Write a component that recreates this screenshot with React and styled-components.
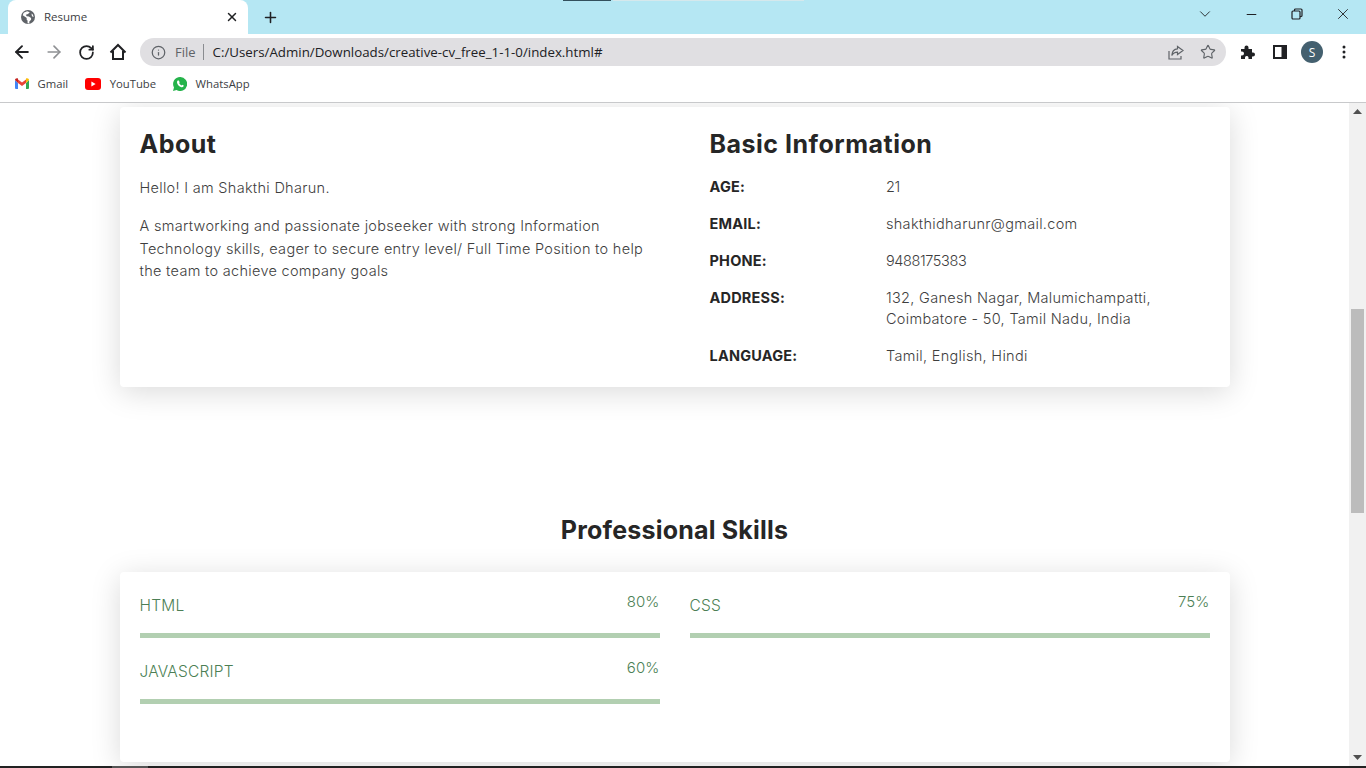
import React from "react";
import styled, { createGlobalStyle } from "styled-components";
import { ArrowLeft, ArrowRight, RotateCw, Info, Star, X, Plus, ChevronDown, Minus } from "lucide-react";

const about = [
  "Hello! I am Shakthi Dharun.",
  "A smartworking and passionate jobseeker with strong Information Technology skills, eager to secure entry level/ Full Time Position to help the team to achieve company goals",
];

const info = [
  ["AGE:", "21"],
  ["EMAIL:", "shakthidharunr@gmail.com"],
  ["PHONE:", "9488175383"],
  ["ADDRESS:", "132, Ganesh Nagar, Malumichampatti, Coimbatore - 50, Tamil Nadu, India"],
  ["LANGUAGE:", "Tamil, English, Hindi"],
];

const skills = [
  ["HTML", "80%"],
  ["CSS", "75%"],
  ["JAVASCRIPT", "60%"],
];

const Global = createGlobalStyle`
  html, body {
    margin: 0;
    height: 100%;
    overflow: hidden;
    background: #fff;
  }
  * { box-sizing: border-box; }
`;

const Screen = styled.div`
  width: 1366px;
  height: 768px;
  display: flex;
  flex-direction: column;
  overflow: hidden;
  font-family: "Open Sans", "Liberation Sans", sans-serif;
`;

const TabStrip = styled.div`
  height: 34px;
  flex: none;
  display: flex;
  align-items: flex-end;
  background: #b5e7f3;
  padding-left: 8px;
  position: relative;
`;

const Tab = styled.div`
  width: 240px;
  height: 34px;
  background: #fff;
  border-radius: 8px 8px 0 0;
  display: flex;
  align-items: center;
  padding: 0 9px 1px 13px;
  font-size: 11.5px;
  color: #3c4043;
`;

const TabTitle = styled.span`
  flex: 1;
  margin-left: 9px;
`;

const NewTab = styled.div`
  width: 44px;
  height: 34px;
  display: flex;
  align-items: center;
  justify-content: center;
  color: #202124;
`;

const Loading = styled.div`
  position: absolute;
  top: 0;
  left: ${(p) => p.$left}px;
  width: ${(p) => p.$width}px;
  height: 1px;
  background: ${(p) => p.$color};
`;

const WindowControls = styled.div`
  margin-left: auto;
  height: 34px;
  display: flex;
  align-items: flex-start;
  color: #202124;
`;

const WindowButton = styled.div`
  width: 46px;
  height: 28px;
  display: flex;
  align-items: center;
  justify-content: center;
`;

const Toolbar = styled.div`
  height: 34px;
  flex: none;
  display: flex;
  align-items: center;
  padding: 2px 0 0 6px;
  background: #fff;
`;

const NavButton = styled.div`
  width: 32px;
  height: 32px;
  display: flex;
  align-items: center;
  justify-content: center;
  color: ${(p) => p.$color || "#202124"};
`;

const Omnibox = styled.div`
  width: 1086px;
  height: 28px;
  margin: 0 6px;
  border-radius: 14px;
  background: #e0dfe2;
  display: flex;
  align-items: center;
  padding: 0 2px 0 11px;
  font-size: 13.3px;
  color: #202124;
`;

const FileLabel = styled.span`
  color: #5f6368;
  margin-left: 9px;
  padding-right: 7px;
  border-right: 1px solid #8a8c90;
  line-height: 16px;
  font-size: 13px;
`;

const Url = styled.span`
  margin-left: 9px;
  flex: 1;
`;

const OmniAction = styled.div`
  width: 32px;
  display: flex;
  justify-content: center;
  color: #5f6368;
`;

const Avatar = styled.div`
  width: 22px;
  height: 22px;
  margin: 0 5px;
  border-radius: 50%;
  background: #44606f;
  color: #fff;
  font-size: 12px;
  display: flex;
  align-items: center;
  justify-content: center;
`;

const Bookmarks = styled.div`
  height: 35px;
  flex: none;
  display: flex;
  align-items: center;
  padding: 0 0 3px 15px;
  gap: 17px;
  background: #fff;
  border-bottom: 1px solid #c8c9cb;
  font-size: 11.3px;
  color: #3c4043;
`;

const Bookmark = styled.div`
  display: flex;
  align-items: center;
  gap: 8.5px;
`;

const Viewport = styled.div`
  flex: 1;
  min-height: 0;
  display: flex;
  background: #fff;
`;

const Page = styled.div`
  flex: 1;
  overflow: hidden;
  display: flex;
  flex-direction: column;
  align-items: center;
  padding-top: 4px;
  font-family: "Inter", "Open Sans", sans-serif;
  color: #212529;
`;

const Card = styled.section`
  width: 1110px;
  flex: none;
  background: #fff;
  border-radius: 4px;
  box-shadow: 0 5px 30px rgba(0, 0, 0, 0.15);
`;

const AboutCard = styled(Card)`
  height: 280px;
  display: flex;
  padding: 20px;
`;

const AboutColumn = styled.div`
  width: 550px;
  padding-right: 40px;
`;

const InfoColumn = styled.div`
  flex: 1;
  padding-left: 20px;
`;

const Heading = styled.h2`
  margin: 0;
  padding-top: 1px;
  font-size: 25px;
  line-height: 32px;
  font-weight: 700;
  color: #262626;
  letter-spacing: 0.5px;
`;

const Paragraph = styled.p`
  margin: 0 0 16px;
  font-size: 14.5px;
  line-height: 22.4px;
  letter-spacing: 0.3px;
  font-weight: 300;
  color: #3e3e3e;
  &:first-of-type {
    margin-top: 17px;
  }
`;

const InfoList = styled.dl`
  margin: 16px 0 0;
  display: grid;
  grid-template-columns: 176.500px 1fr;
  row-gap: 16px;
  font-size: 14.5px;
  line-height: 21px;
`;

const InfoKey = styled.dt`
  font-weight: 700;
  letter-spacing: 0.2px;
  color: #262626;
`;

const InfoValue = styled.dd`
  margin: 0;
  font-weight: 300;
  letter-spacing: ${(p) => (p.$digits ? "-0.4px" : "0.3px")};
  color: #3e3e3e;
`;

const SectionTitle = styled.h2`
  margin: 127px 0 26px;
  font-size: 25px;
  line-height: 32px;
  font-weight: 700;
  color: #262626;
  text-align: center;
  letter-spacing: 0.2px;
`;

const SkillsCard = styled(Card)`
  height: 190px;
  padding: 20px;
  display: grid;
  grid-template-columns: 520px 520px;
  grid-auto-rows: 66px;
  column-gap: 30px;
`;

const Skill = styled.div`
  display: flex;
  flex-direction: column;
  height: 46px;
  color: #4c7f55;
`;

const SkillHead = styled.div`
  display: flex;
  justify-content: space-between;
  height: 41px;
`;

const SkillName = styled.span`
  font-size: 15.5px;
  line-height: 26px;
  padding-top: 1px;
  font-weight: 300;
  letter-spacing: 0.2px;
`;

const SkillValue = styled.span`
  font-size: 15px;
  line-height: 20px;
  font-weight: 300;
  letter-spacing: 0.1px;
`;

const Bar = styled.div`
  height: 5px;
  background: #b2cfb1;
`;

const Scrollbar = styled.div`
  width: 17px;
  flex: none;
  background: #f1f1f1;
  display: flex;
  flex-direction: column;
  align-items: center;
  justify-content: space-between;
  position: relative;
  padding: 6px 0;
`;

const Thumb = styled.div`
  position: absolute;
  top: 206px;
  left: 2px;
  right: 2px;
  height: 204px;
  background: #bcbcbc;
`;

const Taskbar = styled.div`
  height: 2px;
  flex: none;
  background: #222;
  padding-left: 112px;
`;

const TaskbarItem = styled.div`
  width: 36px;
  height: 2px;
  background: #555;
`;

const Globe = () => (
  <svg width="14" height="14" viewBox="0 0 16 16">
    <circle cx="8" cy="8" r="8" fill="#5f6368" />
    <path d="M7 1.500 3 3 2 6l3 2 1.500 1v2l1 1v3l2 .5V13l2-2V9L9 7.500 6.500 7 5.500 5.500 8 4.500l2-2zM12 4l1.500 1 1 3-2-1z" fill="#fff" />
  </svg>
);

const GmailIcon = () => (
  <svg width="14" height="11" viewBox="0 0 14 11">
    <path d="M0 2v8a1 1 0 0 0 1 1h2V5z" fill="#4285f4" />
    <path d="M14 2v8a1 1 0 0 1-1 1h-2V5z" fill="#34a853" />
    <path d="M3 5V1.500L7 4.500l4-3V5L7 8z" fill="#ea4335" />
    <path d="M0 2c0-1.500 1.700-2.300 3-1.500V5z" fill="#c5221f" />
    <path d="M14 2c0-1.500-1.700-2.300-3-1.500V5z" fill="#fbbc04" />
  </svg>
);

const YoutubeIcon = () => (
  <svg width="16" height="12" viewBox="0 0 16 12">
    <rect width="16" height="12" rx="3" fill="#f00" />
    <path d="M6.400 3.400 10.600 6l-4.200 2.600z" fill="#fff" />
  </svg>
);

const WhatsappIcon = () => (
  <svg width="14" height="14" viewBox="0 0 14 14">
    <path d="M7 0a7 7 0 0 0-6 10.500L0 14l3.600-1A7 7 0 1 0 7 0z" fill="#25b34b" />
    <path d="M4.800 3.500c-.8.600-1 1.700-.5 2.900.7 1.700 2 3 3.600 3.600 1.100.4 2.200.2 2.700-.7.200-.4.200-.8.100-.9l-1.400-.7-.7.800c-1-.3-2-1.300-2.500-2.400l.6-.7-.6-1.500c-.2-.4-.9-.5-1.300-.4z" fill="#fff" />
  </svg>
);

const HomeIcon = () => (
  <svg width="18" height="18" viewBox="0 0 18 18" fill="none" stroke="#202124" strokeWidth="2">
    <path d="M1.500 9.500 9 2l7.500 7.500M4 8v8h10V8" />
  </svg>
);

const RestoreIcon = () => (
  <svg width="12" height="12" viewBox="0 0 12 12" fill="none" stroke="#202124" strokeWidth="1.200">
    <rect x="1" y="3" width="8" height="8" rx="1" />
    <path d="M3.500 3V2a1 1 0 0 1 1-1H10a1 1 0 0 1 1 1v5.500a1 1 0 0 1-1 1H9" />
  </svg>
);

const ShareIcon = () => (
  <svg width="16" height="15" viewBox="0 0 16 15" fill="none" stroke="#5f6368" strokeWidth="1.200">
    <path d="M1 6v8h12v-3" />
    <path d="M9.500 1.500 15 5.500 9.500 9.500V7.200C7 7.200 5 8.200 3.800 10.500 4 7 6 4 9.500 3.800z" />
  </svg>
);

const PuzzleIcon = () => (
  <svg width="16" height="16" viewBox="0 0 16 16" fill="#202124">
    <path d="M1 5h3.500V3.500a2 2 0 0 1 4 0V5H12v3.500h1a2 2 0 0 1 0 4h-1V15H8.500v-1.500a1.800 1.800 0 0 0-3.500 0V15H1v-3.500h1a2 2 0 0 0 0-4H1z" />
  </svg>
);

const SidePanelIcon = () => (
  <svg width="14" height="14" viewBox="0 0 14 14">
    <rect width="14" height="14" fill="#202124" />
    <rect x="2" y="2" width="6.500" height="10" fill="#fff" />
  </svg>
);

const DotsIcon = () => (
  <svg width="4" height="14" viewBox="0 0 4 14" fill="#202124">
    <circle cx="2" cy="2" r="1.500" />
    <circle cx="2" cy="7" r="1.500" />
    <circle cx="2" cy="12" r="1.500" />
  </svg>
);

const ArrowTip = ({ down }) => (
  <svg width="9" height="5" viewBox="0 0 9 5" fill="#505050">
    <path d={down ? "M0 0h9L4.500 5z" : "M0 5h9L4.500 0z"} />
  </svg>
);

export default function App() {
  return (
    <Screen>
      <Global />
      <TabStrip>
        <Loading $left={563} $width={48} $color="#33505c" />
        <Loading $left={613} $width={191} $color="#d5e8ec" />
        <Tab>
          <Globe />
          <TabTitle>Resume</TabTitle>
          <X size={14} strokeWidth={2.5} color="#202124" />
        </Tab>
        <NewTab>
          <Plus size={17} strokeWidth={2.2} />
        </NewTab>
        <WindowControls>
          <WindowButton><ChevronDown size={18} strokeWidth={1.2} /></WindowButton>
          <WindowButton><Minus size={15} strokeWidth={1.6} /></WindowButton>
          <WindowButton><RestoreIcon /></WindowButton>
          <WindowButton><X size={18} strokeWidth={1.2} /></WindowButton>
        </WindowControls>
      </TabStrip>
      <Toolbar>
        <NavButton><ArrowLeft size={20} strokeWidth={2.3} /></NavButton>
        <NavButton $color="#8f9194"><ArrowRight size={20} strokeWidth={2} /></NavButton>
        <NavButton><RotateCw size={17} strokeWidth={2.5} /></NavButton>
        <NavButton><HomeIcon /></NavButton>
        <Omnibox>
          <Info size={15} color="#5f6368" strokeWidth={2} />
          <FileLabel>File</FileLabel>
          <Url>C:/Users/Admin/Downloads/creative-cv_free_1-1-0/index.html#</Url>
          <OmniAction><ShareIcon /></OmniAction>
          <OmniAction><Star size={16} strokeWidth={1.7} /></OmniAction>
        </Omnibox>
        <NavButton><PuzzleIcon /></NavButton>
        <NavButton><SidePanelIcon /></NavButton>
        <Avatar>S</Avatar>
        <NavButton><DotsIcon /></NavButton>
      </Toolbar>
      <Bookmarks>
        <Bookmark><GmailIcon />Gmail</Bookmark>
        <Bookmark><YoutubeIcon />YouTube</Bookmark>
        <Bookmark><WhatsappIcon />WhatsApp</Bookmark>
      </Bookmarks>
      <Viewport>
        <Page>
          <AboutCard>
            <AboutColumn>
              <Heading>About</Heading>
              {about.map((text) => (
                <Paragraph key={text}>{text}</Paragraph>
              ))}
            </AboutColumn>
            <InfoColumn>
              <Heading>Basic Information</Heading>
              <InfoList>
                {info.map(([key, value]) => (
                  <React.Fragment key={key}>
                    <InfoKey>{key}</InfoKey>
                    <InfoValue $digits={/^\d+$/.test(value)}>{value}</InfoValue>
                  </React.Fragment>
                ))}
              </InfoList>
            </InfoColumn>
          </AboutCard>
          <SectionTitle>Professional Skills</SectionTitle>
          <SkillsCard>
            {skills.map(([name, value]) => (
              <Skill key={name}>
                <SkillHead>
                  <SkillName>{name}</SkillName>
                  <SkillValue>{value}</SkillValue>
                </SkillHead>
                <Bar />
              </Skill>
            ))}
          </SkillsCard>
        </Page>
        <Scrollbar>
          <ArrowTip />
          <Thumb />
          <ArrowTip down />
        </Scrollbar>
      </Viewport>
      <Taskbar>
        <TaskbarItem />
      </Taskbar>
    </Screen>
  );
}
